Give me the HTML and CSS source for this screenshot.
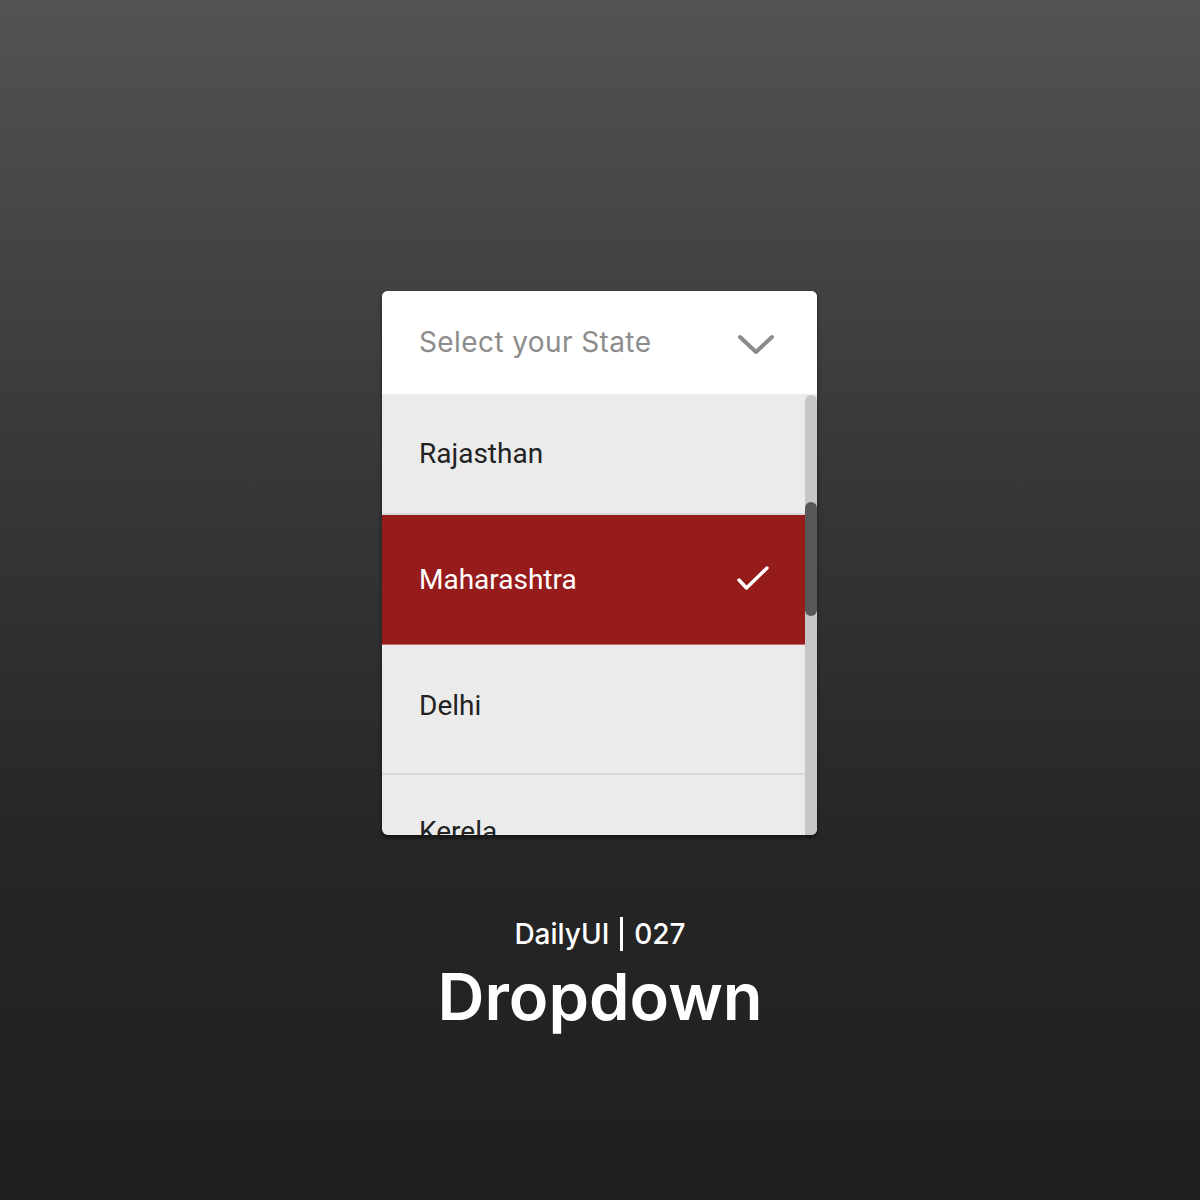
FILE: index.html
```html
<!DOCTYPE html>
<html>
<head>
<meta charset="utf-8">
<link rel="stylesheet" href="styles.css">
</head>
<body>
<main class="page">
  <div class="dropdown">
    <div class="dd-head">
      <span class="placeholder">Select your State</span>
      <svg class="chev" width="36" height="22" viewBox="0 0 36 22"><path d="M2 3 L18 18 L34 3" fill="none" stroke="#8a8a8a" stroke-width="4" stroke-linecap="round" stroke-linejoin="round"/></svg>
    </div>
    <div class="dd-body">
      <ul class="dd-list">
        <li class="item low">Rajasthan</li>
        <li class="item selected">Maharashtra
          <svg class="check" width="34" height="28" viewBox="0 0 34 28"><path d="M3 15 L10.5 23 L31 3" fill="none" stroke="#fff" stroke-width="3.4" stroke-linecap="round" stroke-linejoin="round"/></svg>
        </li>
        <li class="item high">Delhi</li>
        <li class="item higher">Kerela</li>
      </ul>
      <div class="scrollbar"><div class="thumb"></div></div>
    </div>
  </div>
  <div class="caption">
    <div class="sub">DailyUI <span class="bar"></span> 027</div>
    <h1 class="title">Dropdown</h1>
  </div>
</main>
</body>
</html>
```
FILE: styles.css
```css
html, body {
  margin: 0;
  padding: 0;
}
body {
  width: 1200px;
  height: 1200px;
  background: linear-gradient(180deg, #535353 0%, #3a3a3a 35%, #262626 70%, #1f1f1f 100%);
  font-family: Inter, "Noto Sans", sans-serif;
  overflow: hidden;
}
.page {
  display: flex;
  flex-direction: column;
  align-items: center;
  padding-top: 291px;
}
.dropdown {
  width: 435px;
  height: 544px;
  margin-right: 1px;
  border-radius: 6px;
  overflow: hidden;
  background: #ebebeb;
  box-shadow: 0 3px 4px rgba(0,0,0,0.45);
  display: flex;
  flex-direction: column;
}
.dd-head {
  height: 103px;
  flex: none;
  background: #fff;
  display: flex;
  align-items: center;
  justify-content: space-between;
  padding: 0 43px 0 37px;
  box-sizing: border-box;
}
.placeholder {
  font-family: Inter, sans-serif;
  font-size: 28px;
  color: #8c8c8c;
  letter-spacing: 0.4px;
  margin-top: -2px;
}
.chev {
  display: block;
  margin-top: 4px;
}
.dd-body {
  flex: 1;
  display: flex;
  overflow: hidden;
}
.dd-list {
  list-style: none;
  margin: -9px 0 0 0;
  padding: 0;
  flex: 1;
}
.item {
  box-sizing: border-box;
  height: 130px;
  border-bottom: 2px solid #d9d9d9;
  display: flex;
  align-items: center;
  justify-content: space-between;
  padding: 0 35px 0 37px;
  font-family: Roboto, "Liberation Sans", sans-serif;
  font-size: 28px;
  color: #222;
}
.item.low {
  padding-top: 9px;
}
.item.high {
  padding-bottom: 8px;
}
.item.higher {
  padding-bottom: 16px;
}
.item.selected {
  background: #961c1c;
  color: #fff;
  border-bottom: 1px solid #c86a6a;
}
.check {
  display: block;
  margin-top: -2px;
}
.scrollbar {
  width: 12px;
  flex: none;
  background: #c6c6c6;
  border-radius: 6px 6px 0 0;
  margin-top: 1px;
  padding-top: 107px;
  box-sizing: border-box;
}
.thumb {
  height: 114px;
  border-radius: 6px;
  background: #575757;
}
.caption {
  margin-top: 82px;
  display: flex;
  flex-direction: column;
  align-items: center;
  color: #fff;
}
.sub {
  font-size: 28px;
  font-weight: 500;
  display: flex;
  align-items: center;
  gap: 11px;
  line-height: 34px;
}
.bar {
  display: inline-block;
  width: 3px;
  height: 34px;
  background: #fff;
}
.title {
  margin: 6px 0 0 0;
  font-size: 65px;
  font-weight: 600;
  line-height: 80px;
  letter-spacing: 0;
}
```
